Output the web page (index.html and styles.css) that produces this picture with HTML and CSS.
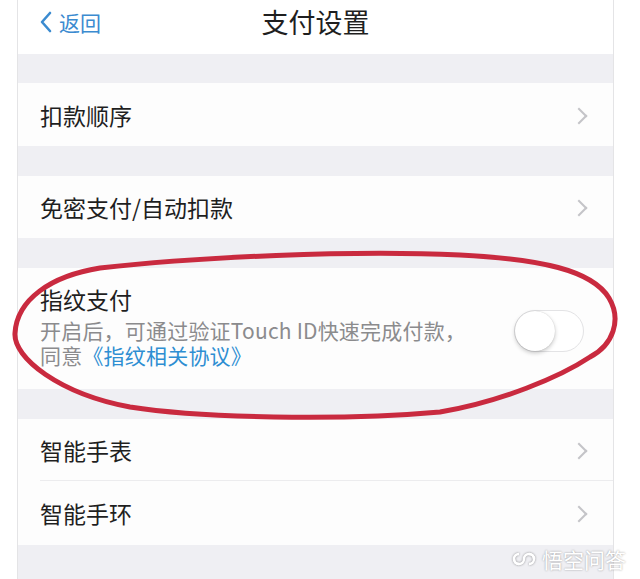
FILE: index.html
```html
<!DOCTYPE html>
<html lang="zh-CN">
<head>
  <meta charset="utf-8">
  <title>支付设置</title>
  <link rel="stylesheet" href="styles.css">
</head>
<body>
<div class="screen">

  <div class="navbar">
    <a class="back" href="#">
      <svg class="back-icon" width="14" height="22" viewBox="0 0 14 22"><path d="M11 2 L3 11 L11 20" fill="none" stroke="#3b8bd0" stroke-width="2.6" stroke-linecap="round" stroke-linejoin="round"/></svg>
      <span>返回</span>
    </a>
    <div class="title">支付设置</div>
  </div>

  <div class="gap gap-first"></div>
  <div class="group">
    <div class="cell cell-first"><span class="label">扣款顺序</span><i class="chev"></i></div>
  </div>

  <div class="gap"></div>
  <div class="group">
    <div class="cell"><span class="label">免密支付/自动扣款</span><i class="chev"></i></div>
  </div>

  <div class="gap"></div>
  <div class="group">
    <div class="cell cell-touch">
      <div class="touch-text">
        <div class="label">指纹支付</div>
        <div class="note">开启后，可通过验证Touch ID快速完成付款，</div>
        <div class="note">同意<a class="link" href="#">《指纹相关协议》</a></div>
      </div>
      <div class="switch"><div class="knob"></div></div>
    </div>
  </div>

  <div class="gap"></div>
  <div class="group">
    <div class="cell cell-sep"><span class="label">智能手表</span><i class="chev"></i></div>
    <div class="cell cell-last"><span class="label">智能手环</span><i class="chev"></i></div>
  </div>

  <div class="gap-end"></div>
</div>

<!-- hand drawn mark over the screenshot -->
<svg class="scribble" width="640" height="579" viewBox="0 0 640 579">
  <path d="M100 268 C200 257 350 250 460 255 C540 259 592 270 609 298 C622 320 613 345 590 357 C560 377 500 402 440 412 C340 421 200 418 130 407 C60 394 13 358 15 333 C17 300 50 276 100 268 Z" fill="none" stroke="#c92a3f" stroke-width="5" stroke-linejoin="round"/>
</svg>

<div class="watermark">
  <svg width="24" height="16" viewBox="0 0 24 16"><path d="M7 3 A5 5 0 1 0 12 8 A5 5 0 1 1 17 13" fill="none" stroke="#fff" stroke-width="2.4"/><path d="M7 13 A5 5 0 0 1 2 8" fill="none" stroke="#fff" stroke-width="2.4"/><path d="M17 3 A5 5 0 0 1 22 8" fill="none" stroke="#fff" stroke-width="2.4"/></svg>
  <span>悟空问答</span>
</div>
</body>
</html>
```

FILE: styles.css
```css
body { margin:0; background:#ffffff; font-family:"Noto Sans CJK SC", "Noto Sans", sans-serif; color:#1f1f1f; }

.screen { margin-left:17px; width:595px; height:579px; border-left:1px solid #e4e4e6; border-right:1px solid #e4e4e6; background:#efeff3; display:flex; flex-direction:column; }

.navbar { height:54px; background:#ffffff; display:flex; align-items:flex-start; position:relative; }
.back { display:flex; align-items:center; gap:6px; margin-left:21px; margin-top:7px; height:30px; color:#3b8bd0; text-decoration:none; font-size:21px; line-height:30px; }
.back-icon { display:block; }
.title { position:absolute; left:0; right:0; top:3px; line-height:38px; text-align:center; font-size:27px; pointer-events:none; }

.gap { height:30px; }
.gap-first { height:29px; }
.gap-end { flex:1; }

.group { background:#fdfdfd; }
.cell { height:62px; display:flex; align-items:center; justify-content:space-between; padding:0 22px 0 22px; }
.cell-first { height:63px; }
.label { font-size:23px; line-height:30px; }
.chev { width:10px; height:10px; border-right:2.4px solid #c4c4c8; border-top:2.4px solid #c4c4c8; transform:rotate(45deg); margin-right:6px; margin-top:2px; }

.cell-sep { border-bottom:1px solid #ececee; margin-left:22px; padding-left:0; box-sizing:border-box; }
.cell-last { height:64px; }

.cell-touch { height:121px; align-items:flex-start; padding-top:16px; box-sizing:border-box; }
.note { font-size:21px; line-height:25px; height:25px; color:#8b8b8d; letter-spacing:0.2px; }
.label + .note { margin-top:4px; }
.link { color:#2e8ed2; text-decoration:none; }

.switch { width:68px; height:40px; border:1.5px solid #e3e3e5; border-radius:22px; background:#ffffff; margin-top:26px; margin-right:7px; position:relative; }
.knob { width:40px; height:40px; border-radius:50%; background:#ffffff; box-shadow:0 2px 4px rgba(0,0,0,0.22), 0 0 1px rgba(0,0,0,0.2); position:absolute; left:0; top:0; }

.scribble { position:absolute; left:0; top:0; pointer-events:none; }

.watermark { position:absolute; left:512px; top:544px; display:flex; align-items:center; gap:6px; color:#ffffff; font-size:21px; text-shadow:0 0 2px rgba(0,0,0,0.4); }
.watermark svg { filter:drop-shadow(0 0 1px rgba(0,0,0,0.4)); }
```
